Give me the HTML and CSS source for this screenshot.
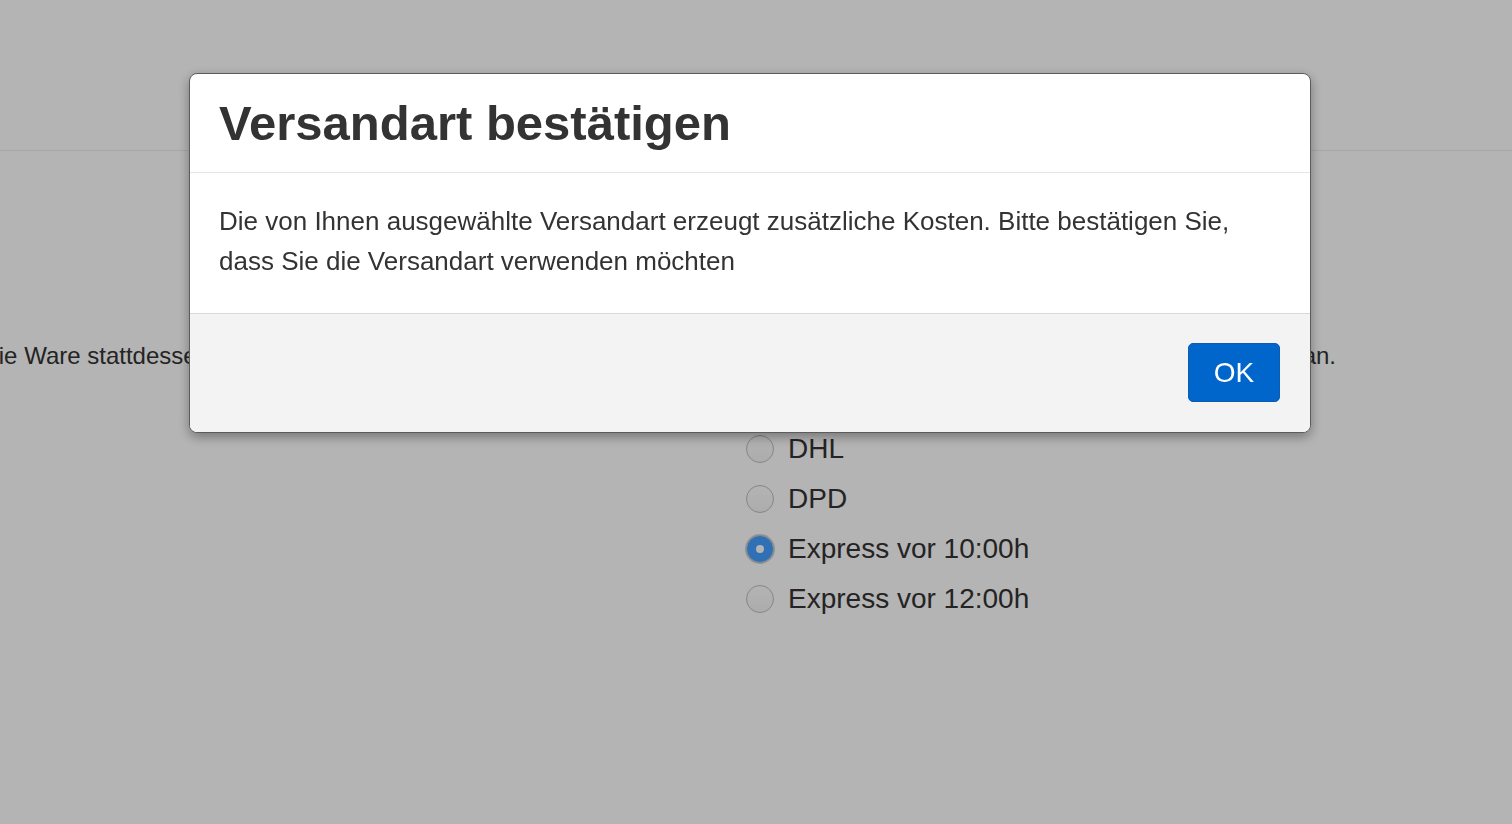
FILE: index.html
```html
<!DOCTYPE html>
<html lang="de">
<head>
    <meta charset="UTF-8">
    <meta name="viewport" content="width=device-width, initial-scale=1.0">
    <title>Versandart wählen</title>
    <link rel="stylesheet" href="styles.css">
</head>
<body>
    <header class="topbar"></header>

    <main class="content">
        <div class="intro">
            <span>Gegen Aufpreis versenden wir die Ware stattdessen auch gerne per Express. Bitte wählen Sie dafür die gewünschte Versandart aus der Liste weiter unten an.</span>
        </div>

        <ul class="shipping-options">
            <li class="option"><span class="radio"></span>DHL</li>
            <li class="option"><span class="radio"></span>DPD</li>
            <li class="option"><span class="radio checked"></span>Express vor 10:00h</li>
            <li class="option"><span class="radio"></span>Express vor 12:00h</li>
        </ul>
    </main>

    <!-- Dialog zur Bestätigung der Versandart -->
    <div class="backdrop">
        <div class="modal">
            <div class="modal-header">
                <h1>Versandart bestätigen</h1>
            </div>
            <div class="modal-body">
                Die von Ihnen ausgewählte Versandart erzeugt zusätzliche Kosten. Bitte bestätigen Sie,
                dass Sie die Versandart verwenden möchten
            </div>
            <div class="modal-footer">
                <button class="btn-ok">OK</button>
            </div>
        </div>
    </div>
</body>
</html>
```

FILE: styles.css
```css
/* Seite */
body, html {
    margin: 0;
    padding: 0;
    background: #fff;
    color: #333;
    font-family: 'Liberation Sans', Arial, sans-serif;
    overflow: hidden;
}

.topbar {
    height: 150px;
    border-bottom: 1px solid #ececec;
}

.content {
    padding-top: 188px;
}

/* Einleitungstext, läuft links aus dem Bild */
.intro {
    display: flex;
    justify-content: flex-end;
    padding-right: 176px;
    font-size: 24px;
    line-height: 34px;
}

.intro span {
    white-space: nowrap;
}

/* Versandarten */
.shipping-options {
    list-style: none;
    margin: 51px 0 0;
    padding: 0 0 0 746px;
}

.option {
    display: flex;
    align-items: center;
    gap: 14px;
    height: 50px;
    font-size: 28px;
}

.radio {
    width: 26px;
    height: 26px;
    border: 1px solid #bdbdbd;
    border-radius: 50%;
    background: linear-gradient(#fff, #f4f4f4);
    position: relative;
}

.radio.checked {
    background: #43a1ff;
    border-color: #c8c8c8;
    box-shadow: 0 0 0 1px #d0d0d0;
}

.radio.checked::after {
    content: "";
    position: absolute;
    top: 50%;
    left: 50%;
    width: 8px;
    height: 8px;
    margin: -4px 0 0 -4px;
    border-radius: 50%;
    background: #fff;
}

/* Dialog */
.backdrop {
    position: fixed;
    inset: 0;
    background: rgba(0, 0, 0, 0.294);
    padding: 73px 0 0 189px;
}

.modal {
    width: 1120px;
    background: #fff;
    border: 1px solid #5c5c5c;
    border-radius: 8px;
    box-shadow: 0 4px 12px rgba(0, 0, 0, 0.35);
    overflow: hidden;
}

.modal-header {
    padding: 0 29px;
    height: 98px;
    display: flex;
    align-items: center;
    border-bottom: 1px solid #e5e5e5;
}

.modal-header h1 {
    margin: 0;
    font-size: 49px;
    font-weight: bold;
    color: #333;
}

.modal-body {
    padding: 28px 40px 32px 29px;
    font-size: 26px;
    line-height: 40px;
    color: #333;
    border-bottom: 1px solid #d9d9d9;
}

.modal-footer {
    background: #f3f3f3;
    padding: 29px 30px 30px;
    display: flex;
    justify-content: flex-end;
}

.btn-ok {
    width: 92px;
    height: 59px;
    background: #0066cc;
    border: 1px solid #0a5db2;
    border-radius: 5px;
    color: #fff;
    font-family: 'Liberation Sans', Arial, sans-serif;
    font-size: 28px;
    cursor: pointer;
}
```
